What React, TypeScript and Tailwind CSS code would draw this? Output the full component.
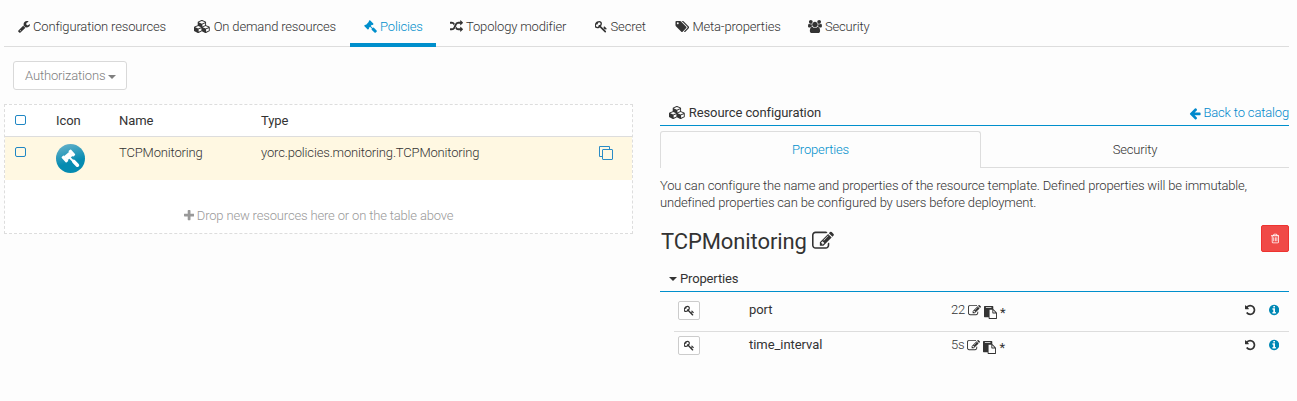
import React from "react";

type Glyph = { box: string; d: string };

const glyphs = {
  wrench: { box: "64 0 1664 1792", d: "M448 1472q0-26-19-45t-45-19-45 19-19 45 19 45 45 19 45-19 19-45zm644-420l-682 682q-37 37-90 37-52 0-91-37l-106-108q-38-36-38-90 0-53 38-91l681-681q39 98 114.5 173.5t173.5 114.5zm634-435q0 39-23 106-47 134-164.5 217.5t-258.5 83.5q-185 0-316.5-131.5t-131.5-316.5 131.5-316.5 316.5-131.5q58 0 121.5 16.5t107.5 46.5q16 11 16 28t-16 28l-293 169v224l193 107q5-3 79-48.5t135.5-81 70.5-35.5q15 0 23.5 10t8.5 25z" },
  cubes: { box: "0 0 2304 1792", d: "M640 1632l384-192v-314l-384 164v342zm-64-454l404-173-404-173-404 173zm1088 454l384-192v-314l-384 164v342zm-64-454l404-173-404-173-404 173zm-448-293l384-165v-266l-384 164v267zm-64-379l441-189-441-189-441 189zm1088 518v416q0 36-19 67t-52 47l-448 224q-25 14-57 14t-57-14l-448-224q-4-2-7-4-2 2-7 4l-448 224q-25 14-57 14t-57-14l-448-224q-33-16-52-47t-19-67v-416q0-38 21.5-70t56.5-48l434-186v-400q0-38 21.5-70t56.5-48l448-192q23-10 50-10t50 10l448 192q35 16 56.5 48t21.5 70v400l434 186q36 16 57 48t21 70z" },
  gavel: { box: "0 0 1792 1792", d: "M1771 1536q0 53-37 90l-107 108q-39 37-91 37-53 0-90-37l-363-364q-38-36-38-90 0-53 43-96l-256-256-126 126q-14 14-34 14t-34-14q2 2 12.5 12t12.5 13 10 11.5 10 13.5 6 13.5 5.5 16.5 1.5 18q0 38-28 68-3 3-16.5 18t-19 20.5-18.5 16.5-22 15.5-22 9-26 4.5q-40 0-68-28l-408-408q-28-28-28-68 0-13 4.5-26t9-22 15.5-22 16.5-18.5 20.5-19 18-16.5q30-28 68-28 10 0 18 1.5t16.5 5.5 13.5 6 13.5 10 11.5 10 13 12.5 12 12.5q-14-14-14-34t14-34l348-348q14-14 34-14t34 14q-2-2-12.5-12t-12.5-13-10-11.5-10-13.5-6-13.5-5.5-16.5-1.5-18q0-38 28-68 3-3 16.5-18t19-20.5 18.5-16.5 22-15.5 22-9 26-4.5q40 0 68 28l408 408q28 28 28 68 0 13-4.5 26t-9 22-15.5 22-16.5 18.5-20.5 19-18 16.5q-30 28-68 28-10 0-18-1.5t-16.5-5.5-13.5-6-13.5-10-11.5-10-13-12.5-12-12.5q14 14 14 34t-14 34l-126 126 256 256q43-43 96-43 52 0 91 37l363 363q37 39 37 91z" },
  random: { box: "0 0 1792 1792", d: "M666 481q-60 92-137 273-22-45-37-72.5t-40.5-63.5-51-56.5-63-35-81.5-14.5h-224q-14 0-23-9t-9-23v-192q0-14 9-23t23-9h224q250 0 410 225zm1126 799q0 14-9 23l-320 320q-9 9-23 9-13 0-22.5-9.5t-9.5-22.5v-192q-32 0-85 .5t-81 1-73-1-71-5-64-10.5-63-18.5-58-28.5-59-40-55-53.5-56-69.5q59-93 136-273 22 45 37 72.5t40.5 63.5 51 56.5 63 35 81.5 14.5h256v-192q0-14 9-23t23-9q12 0 24 10l319 319q9 9 9 23zm0-896q0 14-9 23l-320 320q-9 9-23 9-13 0-22.5-9.5t-9.5-22.5v-192h-256q-48 0-87 15t-69 45-51 61.5-45 77.5q-32 62-78 171-29 66-49.5 111t-54 105-64 100-74 83-90 68.5-106.5 42-128 16.5h-224q-14 0-23-9t-9-23v-192q0-14 9-23t23-9h224q48 0 87-15t69-45 51-61.5 45-77.5q32-62 78-171 29-66 49.5-111t54-105 64-100 74-83 90-68.5 106.5-42 128-16.5h256v-192q0-14 9-23t23-9q12 0 24 10l319 319q9 9 9 23z" },
  key: { box: "64 0 1728 1792", d: "M832 512q0-80-56-136t-136-56-136 56-56 136q0 42 19 83-41-19-83-19-80 0-136 56t-56 136 56 136 136 56 136-56 56-136q0-42-19-83 41 19 83 19 80 0 136-56t56-136zm851 704q0 17-49 66t-66 49q-9 0-28.5-16t-36.5-33-38.5-40-24.5-26l-96 96 220 220q28 28 28 68 0 42-39 81t-81 39q-40 0-68-28l-671-671q-176 131-365 131-163 0-265.5-102.5t-102.5-265.5q0-160 95-313t248-248 313-95q163 0 265.5 102.5t102.5 265.5q0 189-131 365l355 355 96-96q-3-3-26-24.5t-40-38.5-33-36.5-16-28.5q0-17 49-66t66-49q13 0 23 10 6 6 46 44.5t82 79.5 86.5 86 73 78 28.5 41z" },
  tags: { box: "64 0 1984 1792", d: "M576 448q0-53-37.5-90.5t-90.5-37.5-90.5 37.5-37.5 90.5 37.5 90.5 90.5 37.5 90.5-37.5 37.5-90.5zm1067 576q0 53-37 90l-491 492q-39 37-91 37-53 0-90-37l-715-716q-38-37-64.5-101t-26.5-117v-416q0-52 38-90t90-38h416q53 0 117 26.5t102 64.5l715 714q37 39 37 91zm384 0q0 53-37 90l-491 492q-39 37-91 37-36 0-59-14t-53-45l470-470q37-37 37-90 0-52-37-91l-715-714q-38-38-102-64.5t-117-26.5h224q53 0 117 26.5t102 64.5l715 714q37 39 37 91z" },
  users: { box: "64 0 1920 1792", d: "M657 896q-162 5-265 128h-134q-82 0-138-40.5t-56-118.5q0-353 124-353 6 0 43.5 21t97.5 42.5 119 21.5q67 0 133-23-5 37-5 66 0 159 90 256zm1071 637q0 120-73 189.5t-194 69.5h-874q-121 0-194-69.5t-73-189.5q0-53 3.5-103.5t14-109 26.5-108.5 43-97.5 62-81 85.5-53.5 111.5-20q10 0 43 21.5t73 48 107 48 135 21.5 135-21.5 107-48 73-48 43-21.5q61 0 111.5 20t85.5 53.5 62 81 43 97.5 26.5 108.5 14 109 3.5 103.5zm-1024-1277q0 106-75 181t-181 75-181-75-75-181 75-181 181-75 181 75 75 181zm704 384q0 159-112.5 271.5t-271.5 112.5-271.5-112.5-112.5-271.5 112.5-271.5 271.5-112.5 271.5 112.5 112.5 271.5zm576 225q0 78-56 118.5t-138 40.5h-134q-103-123-265-128 90-97 90-256 0-29-5-66 66 23 133 23 59 0 119-21.5t97.5-42.5 43.5-21q124 0 124 353zm-128-609q0 106-75 181t-181 75-181-75-75-181 75-181 181-75 181 75 75 181z" },
  plus: { box: "192 0 1408 1792", d: "M1600 736v192q0 40-28 68t-68 28h-416v416q0 40-28 68t-68 28h-192q-40 0-68-28t-28-68v-416h-416q-40 0-68-28t-28-68v-192q0-40 28-68t68-28h416v-416q0-40 28-68t68-28h192q40 0 68 28t28 68v416h416q40 0 68 28t28 68z" },
  arrowLeft: { box: "64 0 1664 1792", d: "M1664 896v128q0 53-32.5 90.5t-84.5 37.5h-704l293 294q38 36 38 90t-38 90l-75 76q-37 37-90 37-52 0-91-37l-651-652q-37-37-37-90 0-52 37-91l651-650q38-38 91-38 52 0 90 38l75 74q38 38 38 91t-38 91l-293 293h704q52 0 84.5 37.5t32.5 90.5z" },
  edit: { box: "0 0 1792 1792", d: "M888 1184l116-116-152-152-116 116v56h96v96h56zm440-720q-16-16-33 1l-350 350q-17 17-1 33t33-1l350-350q17-17 1-33zm80 594v190q0 119-84.5 203.5t-203.5 84.5h-832q-119 0-203.5-84.5t-84.5-203.5v-832q0-119 84.5-203.5t203.5-84.5h832q63 0 117 25 15 7 18 23 3 17-9 29l-49 49q-14 14-32 8-23-6-45-6h-832q-66 0-113 47t-47 113v832q0 66 47 113t113 47h832q66 0 113-47t47-113v-126q0-13 9-22l64-64q15-15 35-7t20 29zm-96-738l288 288-672 672h-288v-288zm444 132l-92 92-288-288 92-92q28-28 68-28t68 28l152 152q28 28 28 68t-28 68z" },
  paste: { box: "0 0 1792 1792", d: "M768 1664h896v-640h-416q-40 0-68-28t-28-68v-416h-384v1152zm256-1440v-64q0-13-9.5-22.5t-22.5-9.5h-704q-13 0-22.5 9.5t-9.5 22.5v64q0 13 9.5 22.5t22.5 9.5h704q13 0 22.5-9.5t9.5-22.5zm256 672h299l-299-299v299zm512 128v672q0 40-28 68t-68 28h-960q-40 0-68-28t-28-68v-160h-544q-40 0-68-28t-28-68v-1344q0-40 28-68t68-28h1088q40 0 68 28t28 68v328q21 13 36 28l408 408q28 28 48 76t20 88z" },
  trash: { box: "192 0 1408 1792", d: "M704 736v576q0 14-9 23t-23 9h-64q-14 0-23-9t-9-23v-576q0-14 9-23t23-9h64q14 0 23 9t9 23zm256 0v576q0 14-9 23t-23 9h-64q-14 0-23-9t-9-23v-576q0-14 9-23t23-9h64q14 0 23 9t9 23zm256 0v576q0 14-9 23t-23 9h-64q-14 0-23-9t-9-23v-576q0-14 9-23t23-9h64q14 0 23 9t9 23zm128 724v-948h-896v948q0 22 7 40.5t14.5 27 10.5 8.5h832q3 0 10.5-8.5t14.5-27 7-40.5zm-672-1076h448l-48-117q-7-9-17-11h-317q-10 2-17 11zm928 32v64q0 14-9 23t-23 9h-96v948q0 83-47 143.5t-113 60.5h-832q-66 0-113-58.5t-47-141.5v-952h-96q-14 0-23-9t-9-23v-64q0-14 9-23t23-9h309l70-167q15-37 54-63t79-26h320q40 0 79 26t54 63l70 167h309q14 0 23 9t9 23z" },
  undo: { box: "128 0 1536 1792", d: "M1664 896q0 156-61 298t-164 245-245 164-298 61q-172 0-327-72.5t-264-204.5q-7-10-6.5-22.5t8.5-20.5l137-138q10-9 25-9 16 2 23 12 73 95 179 147t225 52q104 0 198.5-40.5t163.5-109.5 109.5-163.5 40.5-198.5-40.5-198.5-109.5-163.5-163.5-109.5-198.5-40.5q-98 0-188 35.5t-160 101.5l137 138q31 30 14 69-17 40-59 40h-448q-26 0-45-19t-19-45v-448q0-42 40-59 39-17 69 14l130 129q107-101 244.5-156.5t284.5-55.5q156 0 298 61t245 164 164 245 61 298z" },
  info: { box: "128 0 1536 1792", d: "M1152 1376v-160q0-14-9-23t-23-9h-96v-512q0-14-9-23t-23-9h-320q-14 0-23 9t-9 23v160q0 14 9 23t23 9h96v320h-96q-14 0-23 9t-9 23v160q0 14 9 23t23 9h448q14 0 23-9t9-23zm-128-896v-160q0-14-9-23t-23-9h-192q-14 0-23 9t-9 23v160q0 14 9 23t23 9h192q14 0 23-9t9-23zm640 416q0 209-103 385.5t-279.5 279.5-385.5 103-385.5-103-279.5-279.5-103-385.5 103-385.5 279.5-279.5 385.5-103 385.5 103 279.5 279.5 103 385.5z" },
} satisfies Record<string, Glyph>;

type IconName = keyof typeof glyphs;

function Icon({ name, className = "h-[13px]" }: { name: IconName; className?: string }) {
  const g = glyphs[name];
  return (
    <svg viewBox={g.box} fill="currentColor" className={`block w-auto shrink-0 ${className}`} aria-hidden="true">
      <path d={g.d} />
    </svg>
  );
}

function Caret() {
  return (
    <svg viewBox="0 0 8 4" className="block h-1 w-2 shrink-0" fill="currentColor" aria-hidden="true">
      <path d="M0 0h8L4 4z" />
    </svg>
  );
}

function PolicyBadge() {
  return (
    <svg viewBox="0 0 29 29" className="block h-[29px] w-[29px]" aria-hidden="true">
      <defs>
        <linearGradient id="badge" x1="0.3" y1="0" x2="0.6" y2="1">
          <stop offset="0" stopColor="#62b0c9" />
          <stop offset="0.65" stopColor="#058bb1" />
        </linearGradient>
      </defs>
      <circle cx="14.5" cy="14.5" r="14.5" fill="url(#badge)" />
      <g transform="translate(12.4 12) rotate(-41)" fill="#fff">
        <rect x="-6.2" y="-3.7" width="3.2" height="7.4" rx="0.8" />
        <rect x="-3.5" y="-2.7" width="7" height="5.4" />
        <rect x="3" y="-3.7" width="3.2" height="7.4" rx="0.8" />
      </g>
      <path d="M13 13l4 4" stroke="#fff" strokeWidth="1.8" />
      <path d="M17.8 17.4l3.6 3.8" stroke="#fff" strokeWidth="3.6" strokeLinecap="round" />
    </svg>
  );
}

const navTabs: { icon: IconName; label: string; width: string; active?: boolean }[] = [
  { icon: "wrench", label: "Configuration resources", width: "w-[176px]" },
  { icon: "cubes", label: "On demand resources", width: "w-[170px]" },
  { icon: "gavel", label: "Policies", width: "w-[86px]", active: true },
  { icon: "random", label: "Topology modifier", width: "w-[145px]" },
  { icon: "key", label: "Secret", width: "w-[80px]" },
  { icon: "tags", label: "Meta-properties", width: "w-[133px]" },
  { icon: "users", label: "Security", width: "w-[90px]" },
];

function Checkbox() {
  return <span className="block h-[10px] w-[11px] rounded-[2px] border border-[#2087c4]" />;
}

function PropertyRow({ name, value }: { name: string; value: string }) {
  return (
    <div className="ml-[14px] flex h-[35px] pl-1">
      <button className="mt-1 flex h-[19px] w-[22px] items-center justify-center rounded-[2px] border border-[#ccc] bg-white">
        <Icon name="key" className="h-[11px]" />
      </button>
      <span className="ml-[49px] mt-[5px] w-[202px] font-normal leading-4 tracking-[-0.05px]">{name}</span>
      <div className="mt-[5px] flex leading-4">
        {value}
        <Icon name="edit" className="ml-[3px] mt-[2px] h-[13px]" />
        <Icon name="paste" className="ml-[3px] mt-1 h-[13px]" />
        <span className="ml-[3px] mt-[3px] font-normal">*</span>
      </div>
      <div className="ml-auto mr-[10px] mt-[7px] flex gap-[13px]">
        <Icon name="undo" className="h-3" />
        <span className="text-[#0088b5]">
          <Icon name="info" className="h-3" />
        </span>
      </div>
    </div>
  );
}

export default function App() {
  return (
    <div className="h-[401px] w-[1297px] overflow-hidden bg-[#fdfdfd] pl-1 pr-2 font-[Roboto,sans-serif] text-[13px] font-light tracking-[-0.16px] text-[#333]">
      <nav className="flex h-[47px] border-b border-[#ddd] pt-[7px]">
        {navTabs.map((t) => (
          <a
            key={t.label}
            className={`flex h-10 shrink-0 items-center gap-[3px] whitespace-nowrap border-b-4 pl-[14px] pt-1 ${t.width} ${
              t.active ? "border-[#008fcc] text-[#008fcc]" : "border-transparent"
            }`}
          >
            <Icon name={t.icon} className="mb-px h-[13px]" />
            {t.label}
          </a>
        ))}
      </nav>

      <button className="ml-[9px] mt-[14px] flex h-[29px] w-[114px] items-center gap-[3px] rounded-[3px] border border-[#d9d9d9] bg-white pl-[11px] tracking-[-0.15px] text-[#808080]">
        Authorizations
        <span className="pt-[2px]"><Caret /></span>
      </button>

      <main className="flex">
        <section className="mt-[14px] h-[130px] w-[629px] shrink-0 border border-dashed border-[#ddd] bg-white">
          <div className="flex h-8 items-center border-b border-[#ddd] pl-[10px] font-normal tracking-[-0.05px]">
            <div className="w-[41px] pb-px"><Checkbox /></div>
            <span className="w-[63px]">Icon</span>
            <span className="w-[142px]">Name</span>
            <span>Type</span>
          </div>
          <div className="flex h-[43px] bg-[#fff8e2] pl-[10px]">
            <div className="w-[41px] pt-[10px]"><Checkbox /></div>
            <div className="w-[63px] pt-[7px]"><PolicyBadge /></div>
            <span className="w-[142px] pt-2 leading-4">TCPMonitoring</span>
            <span className="pt-2 leading-4">yorc.policies.monitoring.TCPMonitoring</span>
            <svg viewBox="0 0 14 14" className="ml-auto mr-[19px] mt-[9px] block h-[14px] w-[14px]" fill="none" stroke="#2b8cc6" aria-hidden="true">
              <path d="M3 10.5H.5V.5h10V3" />
              <rect x="3.5" y="3.5" width="10" height="10" rx=".5" />
            </svg>
          </div>
          <div className="mt-[28px] flex h-4 items-center justify-center gap-[3px] text-[#999]">
            <Icon name="plus" className="mb-px h-[13px]" />
            Drop new resources here or on the table above
          </div>
        </section>

        <section className="ml-[27px] mt-[14px] w-[629px] shrink-0">
          <div className="flex h-[22px] items-start justify-between border-b border-[#008fcc] pl-[9px] pt-px">
            <div className="flex h-4 items-center gap-[3px] font-normal tracking-[-0.08px]">
              <Icon name="cubes" className="mb-px h-[13px]" />
              Resource configuration
            </div>
            <a className="flex h-4 items-center gap-[2px] text-[#0088cc]">
              <Icon name="arrowLeft" />
              Back to catalog
            </a>
          </div>
          <div className="mt-[5px] flex h-[37px]">
            <div className="flex w-[321px] items-center justify-center rounded-t-[3px] border border-b-0 border-[#ddd] text-[#008fcc]">
              Properties
            </div>
            <div className="flex flex-1 items-center justify-center border-b border-[#ddd] pt-px">Security</div>
          </div>
          <p className="mt-[9px] whitespace-nowrap leading-[17px]">
            You can configure the name and properties of the resource template. Defined properties will be immutable,
            <br />
            undefined properties can be configured by users before deployment.
          </p>
          <div className="mt-[14px] flex h-[28px] justify-between">
            <h3 className="flex h-8 items-center gap-[5px] pl-px pt-px text-[22px] font-normal leading-8 tracking-[-0.1px]">
              TCPMonitoring
              <Icon name="edit" className="mb-[2px] h-[22px]" />
            </h3>
            <button className="flex h-[27px] w-[28px] items-center justify-center rounded-[2px] border border-[#ee3330] bg-[#f04a47] text-white">
              <Icon name="trash" className="h-[11px]" />
            </button>
          </div>
          <div className="flex h-[39px] items-end border-b border-[#008fcc] pl-[9px] pb-1 font-normal tracking-[-0.15px]">
            <div className="flex h-4 items-center gap-[3px]">
              <Caret />
              Properties
            </div>
          </div>
          <div className="pt-[5px]">
            <PropertyRow name="port" value="22" />
            <div className="ml-[14px] -mt-px border-t border-[#ddd]" />
            <PropertyRow name="time_interval" value="5s" />
          </div>
        </section>
      </main>
    </div>
  );
}
